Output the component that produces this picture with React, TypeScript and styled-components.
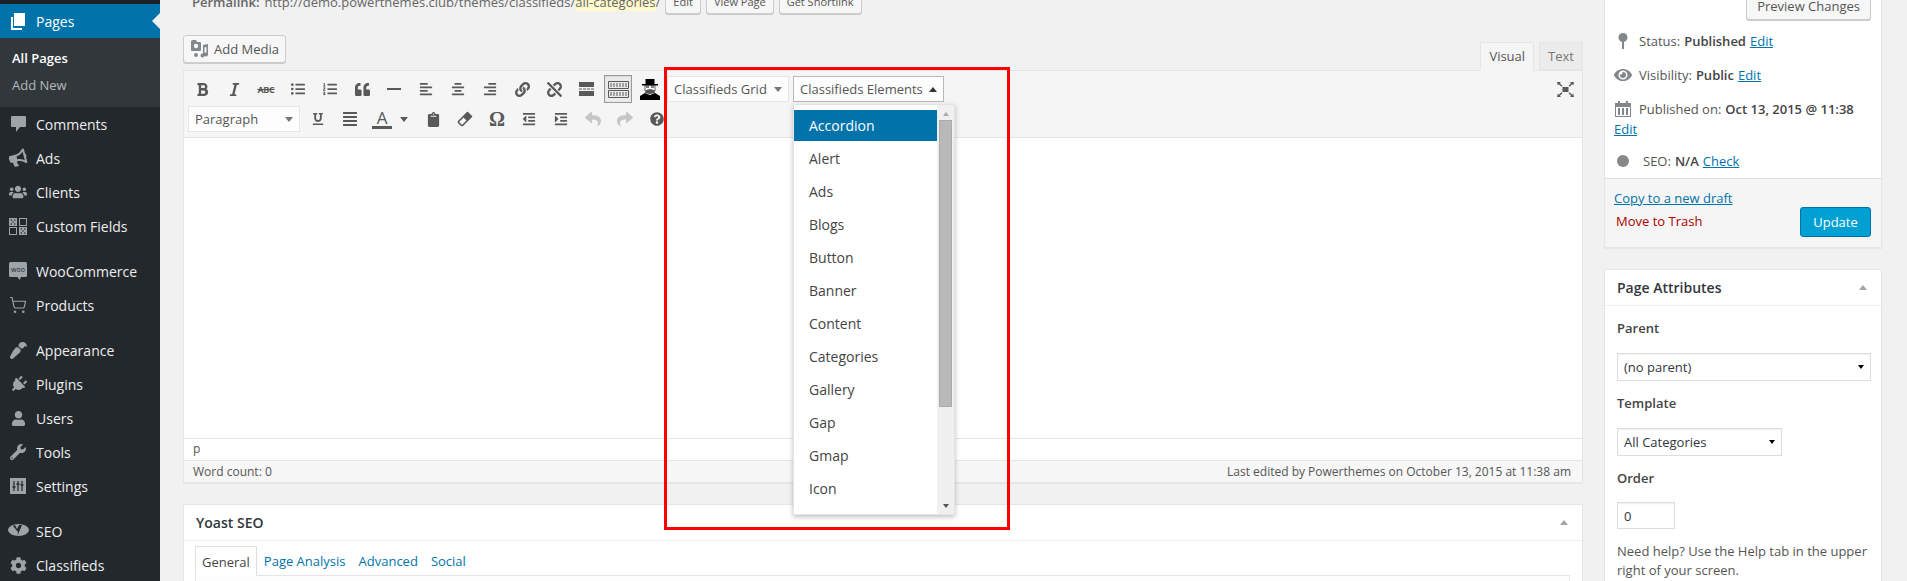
import React from "react";
import styled, { createGlobalStyle } from "styled-components";
import {
  FaBold, FaItalic, FaListUl, FaListOl, FaQuoteLeft, FaAlignLeft, FaAlignCenter, FaAlignRight,
  FaLink, FaUnlink, FaUnderline, FaAlignJustify, FaClipboard, FaOutdent, FaIndent,
  FaReply, FaShare, FaQuestionCircle, FaBullhorn, FaUsers, FaPaintBrush, FaPlug, FaUser,
  FaWrench, FaCog, FaEye,
} from "react-icons/fa";
import { ShoppingCart } from "lucide-react";

const GlobalStyle = createGlobalStyle`
  html, body { margin: 0; padding: 0; height: 581px; overflow: hidden; background: #f1f1f1; }
  body { font-family: "Open Sans", "Liberation Sans", sans-serif; font-size: 13px; color: #444; }
  * { box-sizing: border-box; }
`;

const Page = styled.div`
  position: relative;
  display: flex;
  width: 1907px;
  height: 581px;
  overflow: hidden;
`;

/* ---------- admin menu ---------- */

const Sidebar = styled.nav`
  flex: 0 0 160px;
  background: #23282d;
  border-top: 4px solid #1c2126;
  color: #eee;
  font-size: 14px;
`;

const MenuItem = styled.div<{ $active?: boolean; $gap?: boolean }>`
  position: relative;
  display: flex;
  align-items: center;
  height: 34px;
  margin-top: ${(p) => (p.$gap ? "11px" : "0")};
  background: ${(p) => (p.$active ? "#0073aa" : "transparent")};
  color: ${(p) => (p.$active ? "#fff" : "#eee")};
  &::before {
    content: "";
    display: ${(p) => (p.$active ? "block" : "none")};
    position: absolute;
    right: 0;
    top: 9px;
    border: 8px solid transparent;
    border-right-color: #f1f1f1;
    border-left-width: 0;
  }
`;

const MenuIcon = styled.span<{ $active?: boolean }>`
  display: flex;
  align-items: center;
  justify-content: center;
  width: 36px;
  color: ${(p) => (p.$active ? "#fff" : "#9ea3a8")};
`;

const SubMenu = styled.div`
  background: #32373c;
  padding: 7px 0 8px;
`;

const SubItem = styled.div<{ $current?: boolean }>`
  height: 27px;
  line-height: 27px;
  padding-left: 12px;
  font-size: 13px;
  font-weight: ${(p) => (p.$current ? 600 : 400)};
  color: ${(p) => (p.$current ? "#fff" : "#b4b9be")};
`;

const PagesIcon = () => (
  <svg width="16" height="17" viewBox="0 0 16 17" fill="#fff">
    <path d="M4 0h11v13H4z" />
    <path d="M1 4h2v11h9v2H1z" />
  </svg>
);

const CommentIcon = () => (
  <svg width="15" height="16" viewBox="0 0 15 16" fill="currentColor">
    <path d="M1 0h13a1 1 0 0 1 1 1v9a1 1 0 0 1-1 1H9l-4 5v-5H1a1 1 0 0 1-1-1V1a1 1 0 0 1 1-1z" />
  </svg>
);

const FieldsIcon = () => (
  <svg width="18" height="17" viewBox="0 0 18 17" fill="currentColor">
    <path d="M0 0h8v8H0zM1.500 2a.8.8 0 1 0 1.600 0 .8.8 0 0 0-1.600 0zM5 2a.8.8 0 1 0 1.600 0A.8.8 0 0 0 5 2zM3.200 4a.8.8 0 1 0 1.600 0 .8.8 0 0 0-1.600 0zM1.500 6a.8.8 0 1 0 1.600 0 .8.8 0 0 0-1.600 0zM5 6a.8.8 0 1 0 1.600 0A.8.8 0 0 0 5 6z" fillRule="evenodd" />
    <path d="M10 0h8v8h-8zm1 1v6h6V1z" fillRule="evenodd" />
    <path d="M0 9h8v8H0zm1 1v6h6v-6z" fillRule="evenodd" />
    <path d="M10 9h8v8h-8zM11.500 11a.8.8 0 1 0 1.600 0 .8.8 0 0 0-1.600 0zM15 11a.8.8 0 1 0 1.600 0 .8.8 0 0 0-1.600 0zM13.200 13a.8.8 0 1 0 1.600 0 .8.8 0 0 0-1.600 0zM11.500 15a.8.8 0 1 0 1.600 0 .8.8 0 0 0-1.600 0zM15 15a.8.8 0 1 0 1.600 0 .8.8 0 0 0-1.600 0z" fillRule="evenodd" />
  </svg>
);

const WooIcon = () => (
  <svg width="18" height="18" viewBox="0 0 18 18">
    <path d="M1.500 0h15A1.500 1.500 0 0 1 18 1.500v12a1.500 1.500 0 0 1-1.500 1.500H12l-1.500 3-2-3h-7A1.500 1.500 0 0 1 0 13.500v-12A1.500 1.500 0 0 1 1.500 0z" fill="#9ea3a8" />
    <text x="9" y="10" textAnchor="middle" fontSize="7" fontFamily="Open Sans, sans-serif" fill="#23282d">woo</text>
  </svg>
);

const SlidersIcon = () => (
  <svg width="16" height="16" viewBox="0 0 16 16">
    <path d="M0 0h16v16H0z" fill="currentColor" />
    <path d="M4 3v10M12 3v10M8 3v10" stroke="#23282d" strokeWidth="1.200" />
    <path d="M2.500 9h3M6.500 6h3M10.500 7h3" stroke="#23282d" strokeWidth="1.500" />
  </svg>
);

const YoastIcon = () => (
  <svg width="21" height="15" viewBox="0 0 21 15">
    <ellipse cx="10.500" cy="6" rx="10.500" ry="6" fill="currentColor" />
    <path d="M7 1l2 4 2-4h3l-3 7-1.500 4 3 2-3-.5 .5-5.500L5 2z" fill="#23282d" />
  </svg>
);

type NavEntry = { label: string; icon: React.ReactNode; gap?: boolean };

const navEntries: NavEntry[] = [
  { label: "Comments", icon: <CommentIcon /> },
  { label: "Ads", icon: <FaBullhorn size={18} style={{ transform: "rotate(-15deg)" }} /> },
  { label: "Clients", icon: <FaUsers size={18} /> },
  { label: "Custom Fields", icon: <FieldsIcon /> },
  { label: "WooCommerce", icon: <WooIcon />, gap: true },
  { label: "Products", icon: <ShoppingCart size={18} strokeWidth={1.5} /> },
  { label: "Appearance", icon: <FaPaintBrush size={17} style={{ transform: "rotate(180deg)" }} />, gap: true },
  { label: "Plugins", icon: <FaPlug size={17} style={{ transform: "rotate(45deg)" }} /> },
  { label: "Users", icon: <FaUser size={15} /> },
  { label: "Tools", icon: <FaWrench size={16} /> },
  { label: "Settings", icon: <SlidersIcon /> },
  { label: "SEO", icon: <YoastIcon />, gap: true },
  { label: "Classifieds", icon: <FaCog size={17} /> },
];

/* ---------- content ---------- */

const Content = styled.main`
  flex: 1;
  display: grid;
  grid-template-columns: 1400px 278px;
  column-gap: 21px;
  padding-left: 23px;
  align-items: start;
`;

const EditorColumn = styled.div`
  min-width: 0;
`;

const PermalinkRow = styled.div`
  display: flex;
  align-items: center;
  height: 26px;
  margin-top: -11px;
  padding-left: 9px;
  color: #666;
`;

const PermalinkLabel = styled.strong`
  font-weight: 600;
  margin-right: 5px;
`;

const Slug = styled.span`
  background: #fffbcc;
`;

const SmallButton = styled.span`
  display: inline-block;
  height: 24px;
  line-height: 22px;
  padding: 0 7px;
  margin-left: 5px;
  font-size: 11px;
  color: #555;
  background: #f7f7f7;
  border: 1px solid #ccc;
  border-radius: 3px;
  box-shadow: 0 1px 0 #ccc;
`;

const MediaBar = styled.div`
  display: flex;
  justify-content: space-between;
  align-items: flex-end;
  height: 55px;
`;

const MediaButton = styled.span`
  display: inline-flex;
  align-items: center;
  gap: 5px;
  width: 103px;
  height: 28px;
  margin-bottom: 7px;
  padding-left: 7px;
  color: #555;
  background: #f7f7f7;
  border: 1px solid #ccc;
  border-radius: 3px;
  box-shadow: 0 1px 0 #ccc;
`;

const Tabs = styled.div`
  display: flex;
  gap: 5px;
`;

const EditorTab = styled.span<{ $active?: boolean }>`
  height: ${(p) => (p.$active ? "29px" : "28px")};
  margin-bottom: ${(p) => (p.$active ? "-1px" : "0")};
  padding: 0 8px;
  line-height: 27px;
  color: ${(p) => (p.$active ? "#555" : "#777")};
  background: ${(p) => (p.$active ? "#f5f5f5" : "#ebebeb")};
  border: 1px solid #e5e5e5;
  border-bottom-color: ${(p) => (p.$active ? "#f5f5f5" : "#e5e5e5")};
  position: relative;
`;

const Toolbar = styled.div`
  display: flex;
  flex-direction: column;
  height: 68px;
  padding-top: 3px;
  background: #f5f5f5;
  border: 1px solid #e5e5e5;
`;

const ToolRow = styled.div<{ $inset: number }>`
  display: flex;
  align-items: center;
  height: 30px;
  padding-left: ${(p) => p.$inset}px;
`;

const Tool = styled.span<{ $width?: number; $pressed?: boolean; $faint?: boolean; $gap?: number }>`
  display: flex;
  align-items: center;
  justify-content: center;
  flex: 0 0 ${(p) => p.$width ?? 32}px;
  height: 28px;
  margin: 0 ${(p) => p.$gap ?? 0}px;
  color: ${(p) => (p.$faint ? "#c6c6c6" : "#595959")};
  background: ${(p) => (p.$pressed ? "#ebebeb" : "transparent")};
  ${(p) => p.$pressed && "border: 1px solid #999; box-shadow: inset 0 1px 2px rgba(0,0,0,.08);"}
`;

const ColorTool = styled(Tool)`
  justify-content: flex-start;
  gap: 8px;
  padding-left: 6px;
`;

const UnderlineTool = styled(Tool)`
  margin-left: 2px;
`;

const StrikeText = styled.span`
  font-size: 9px;
  font-weight: 700;
  line-height: 1;
  letter-spacing: -0.3px;
  text-decoration: line-through;
`;

const LetterA = styled.span`
  display: flex;
  flex-direction: column;
  align-items: center;
  width: 20px;
  font-size: 17px;
  line-height: 17px;
  &::after {
    content: "";
    width: 20px;
    height: 3px;
    background: #595959;
  }
`;

const Omega = styled.span`
  font-family: "Liberation Serif", serif;
  font-size: 20px;
  font-weight: 700;
`;

const Arrow = styled.i<{ $up?: boolean; $color?: string; $size?: number }>`
  display: inline-block;
  flex: none;
  width: 0;
  height: 0;
  border-left: ${(p) => p.$size ?? 4}px solid transparent;
  border-right: ${(p) => p.$size ?? 4}px solid transparent;
  ${(p) => (p.$up ? "border-bottom" : "border-top")}: ${(p) => (p.$size ?? 4) + 1}px solid ${(p) => p.$color ?? "#777"};
`;

const ToolSelect = styled.span<{ $width: number; $open?: boolean; $gap?: number }>`
  position: relative;
  display: flex;
  align-items: center;
  justify-content: space-between;
  flex: 0 0 ${(p) => p.$width}px;
  height: 26px;
  margin-left: ${(p) => p.$gap ?? 0}px;
  padding: 0 6px;
  color: #555;
  background: #fdfdfd;
  border: 1px solid ${(p) => (p.$open ? "#b9b9b9" : "#e5e5e5")};
`;

const FullscreenTool = styled(Tool)`
  margin-left: auto;
  margin-right: 4px;
`;

const Dropdown = styled.div`
  position: absolute;
  top: 27px;
  left: -1px;
  display: flex;
  width: 162px;
  height: 411px;
  background: #fff;
  border: 1px solid #e4e4e4;
  box-shadow: 0 2px 5px rgba(0, 0, 0, 0.25);
  z-index: 2;
`;

const OptionList = styled.div`
  flex: 1;
  padding-top: 5px;
  font-size: 14px;
`;

const OptionItem = styled.div<{ $active?: boolean }>`
  height: ${(p) => (p.$active ? "31px" : "33px")};
  margin-bottom: ${(p) => (p.$active ? "1px" : "0")};
  padding-left: 15px;
  line-height: ${(p) => (p.$active ? "31px" : "33px")};
  color: ${(p) => (p.$active ? "#fff" : "#444")};
  background: ${(p) => (p.$active ? "#0073aa" : "transparent")};
`;

const ScrollTrack = styled.div`
  display: flex;
  flex-direction: column;
  align-items: center;
  width: 17px;
  padding: 7px 2px 6px;
  background: #f0f0f0;
`;

const ScrollThumb = styled.div`
  align-self: stretch;
  height: 287px;
  margin: 4px 0 auto;
  background: #b9b9b9;
  border: 1px solid #aaa;
`;

const EditorBody = styled.div`
  height: 300px;
  background: #fff;
  border-left: 1px solid #e5e5e5;
  border-right: 1px solid #e5e5e5;
`;

const PathBar = styled.div`
  height: 23px;
  padding-left: 9px;
  line-height: 20px;
  font-size: 12px;
  color: #555;
  background: #fff;
  border: 1px solid #e5e5e5;
`;

const StatusBar = styled.div`
  display: flex;
  justify-content: space-between;
  height: 23px;
  margin-top: -1px;
  padding: 0 11px 0 9px;
  line-height: 21px;
  font-size: 12px;
  color: #555;
  background: #f7f7f7;
  border: 1px solid #e5e5e5;
  box-shadow: 0 1px 1px rgba(0, 0, 0, 0.04);
`;

const MetaBox = styled.section<{ $top: number }>`
  margin-top: ${(p) => p.$top}px;
  background: #fff;
  border: 1px solid #e5e5e5;
  box-shadow: 0 1px 1px rgba(0, 0, 0, 0.04);
`;

const BoxHeading = styled.h2`
  display: flex;
  align-items: center;
  justify-content: space-between;
  height: 36px;
  margin: 0;
  padding: 0 14px 0 12px;
  font-size: 14px;
  font-weight: 600;
  color: #32373c;
  border-bottom: 1px solid #eee;
`;

const SeoTabs = styled.div`
  display: flex;
  align-items: flex-end;
  height: 35px;
  margin: 0 12px 0 11px;
  border-bottom: 1px solid #e5e5e5;
`;

const SeoTab = styled.span<{ $active?: boolean }>`
  height: ${(p) => (p.$active ? "30px" : "29px")};
  padding: 0 6px;
  margin-right: 1px;
  margin-bottom: ${(p) => (p.$active ? "-1px" : "0")};
  line-height: 31px;
  color: ${(p) => (p.$active ? "#444" : "#0073aa")};
  ${(p) => p.$active && "border: 1px solid #dfdfdf; border-bottom: 1px solid #fff; background: #fff;"}
`;

const SeoPanel = styled.div`
  height: 60px;
  margin: 0 12px 0 11px;
  background: #fdfdfd;
  border-left: 1px solid #e5e5e5;
  border-right: 1px solid #e5e5e5;
`;

/* ---------- right column ---------- */

const SideColumn = styled.aside`
  min-width: 0;
`;

const PublishBox = styled.section`
  margin-top: -10px;
  background: #fff;
  border: 1px solid #e5e5e5;
  box-shadow: 0 1px 1px rgba(0, 0, 0, 0.04);
`;

const PreviewRow = styled.div`
  display: flex;
  justify-content: flex-end;
  height: 33px;
  padding-right: 10px;
`;

const PreviewButton = styled.span`
  height: 29px;
  padding: 0 10px;
  line-height: 29px;
  color: #555;
  background: #f7f7f7;
  border: 1px solid #ccc;
  border-radius: 3px;
  box-shadow: 0 1px 0 #ccc;
`;

const MiscRow = styled.div`
  display: flex;
  align-items: center;
  height: 34px;
  padding-left: 9px;
  color: #555;
`;

const MiscIcon = styled.span`
  display: flex;
  justify-content: center;
  flex: 0 0 18px;
  margin-right: 7px;
  color: #82878c;
`;

const DateRow = styled.div`
  height: 52px;
  padding: 7px 0 0 9px;
  line-height: 20px;
  color: #555;
`;

const DateLine = styled.div`
  display: flex;
  align-items: center;
`;

const Strong = styled.b`
  font-weight: 600;
  color: #444;
  margin: 0 4px;
`;

const Anchor = styled.a`
  color: #0073aa;
  text-decoration: underline;
`;

const SeoDot = styled.i`
  display: block;
  width: 12px;
  height: 12px;
  border-radius: 50%;
  background: #888;
`;

const SeoLabel = styled.span`
  padding-left: 4px;
`;

const MajorActions = styled.div`
  display: grid;
  grid-template-columns: 1fr auto;
  height: 69px;
  padding: 9px 10px 0 9px;
  background: #f5f5f5;
  border-top: 1px solid #ddd;
`;

const ActionLinks = styled.div`
  display: flex;
  flex-direction: column;
  gap: 3px;
  line-height: 20px;
`;

const TrashLink = styled.a`
  padding-left: 2px;
  color: #a00;
`;

const UpdateButton = styled.span`
  width: 71px;
  height: 30px;
  margin-top: 19px;
  line-height: 28px;
  text-align: center;
  color: #fff;
  background: #00a0d2;
  border: 1px solid #0073aa;
  border-radius: 3px;
`;

const AttributesBody = styled.div`
  padding: 0 12px;
  height: 300px;
`;

const FieldLabel = styled.div`
  height: 20px;
  margin-top: 12px;
  line-height: 20px;
  font-weight: 600;
  color: #444;
`;

const SelectBox = styled.div<{ $width: number }>`
  display: flex;
  align-items: center;
  justify-content: space-between;
  width: ${(p) => p.$width}px;
  height: 28px;
  margin-top: 15px;
  padding: 0 6px;
  background: #fff;
  border: 1px solid #ddd;
  box-shadow: inset 0 1px 2px rgba(0, 0, 0, 0.07);
  color: #32373c;
`;

const NumberBox = styled(SelectBox)`
  height: 27px;
  margin-top: 14px;
`;

const HelpText = styled.p`
  margin: 13px 0 0;
  line-height: 19px;
  color: #555;
`;

const Highlight = styled.div`
  position: absolute;
  left: 664px;
  top: 67px;
  width: 346px;
  height: 463px;
  border: 3px solid #f00;
  z-index: 3;
  pointer-events: none;
`;

const MediaIcon = () => (
  <svg width="18" height="18" viewBox="0 0 18 18" fill="#82878c">
    <path d="M2 0h3l1 2h3a1 1 0 0 1 1 1v7a1 1 0 0 1-1 1H1a1 1 0 0 1-1-1V2a2 2 0 0 1 2-2z" />
    <circle cx="5" cy="6" r="2.200" fill="#f7f7f7" />
    <path d="M12 5l5-1v10.500a2 2 0 1 1-1.500-2V7l-2 .5v8a2 2 0 1 1-1.500-2zM3 15a2 2 0 1 0 4 0 2 2 0 0 0-4 0z" />
  </svg>
);

const HrIcon = () => (
  <svg width="14" height="2" viewBox="0 0 14 2"><path d="M0 0h14v2H0z" fill="currentColor" /></svg>
);

const ReadMoreIcon = () => (
  <svg width="15" height="14" viewBox="0 0 15 14" fill="currentColor">
    <path d="M0 0h15v5H0zM0 9h15v5H0zM0 6.500h3v1H0zM4 6.500h3v1H4zM8 6.500h3v1H8zM12 6.500h3v1h-3z" />
  </svg>
);

const KeyboardIcon = () => (
  <svg width="21" height="17" viewBox="0 0 21 17" fill="none" stroke="#595959">
    <path d="M.5 .5h20v7H.5zM.5 9.500h20v7H.5z" />
    <path d="M2 3h17M2 5h17M2 12h17M2 14h17" strokeDasharray="2 1" />
  </svg>
);

const PersonIcon = () => (
  <svg width="20" height="21" viewBox="0 0 20 21">
    <path d="M5.500 0h9v5h-9zM2 5h16v1.500H2z" fill="#000" />
    <path d="M5 6.500h10V12H5z" fill="#fff" stroke="#000" strokeWidth=".6" />
    <path d="M6 8h3M11 8h3" stroke="#000" />
    <path d="M6 11l4-1 4 1 1 3-5 1-5-1z" fill="#555" />
    <path d="M0 21v-4l5-3 5 2 5-2 5 3v4z" fill="#000" />
  </svg>
);

const EraserIcon = () => (
  <svg width="16" height="16" viewBox="0 0 16 16" fill="none" stroke="currentColor" strokeWidth="1.600">
    <path d="M10.500 1.500l4 4-9 9h-1l-3-3v-1z" strokeLinejoin="round" />
    <path d="M10.500 1.500l4 4-4.500 4.500-4-4z" fill="currentColor" stroke="none" />
  </svg>
);

const FullscreenIcon = () => (
  <svg width="17" height="15" viewBox="0 0 17 15" fill="currentColor">
    <path d="M5.500 5h6v5h-6z" />
    <path d="M0 0h4L2.800 1.200 5.500 3.800 4.500 4.800 1.800 2.200.8 3.400zM17 0h-4l1.200 1.200-2.700 2.600 1 1 2.700-2.600 1 1.200zM0 15h4l-1.200-1.200 2.700-2.600-1-1-2.700 2.600-1-1.200zM17 15h-4l1.200-1.200-2.700-2.600 1-1 2.700 2.600 1-1.200z" />
  </svg>
);

const PinIcon = () => (
  <svg width="10" height="16" viewBox="0 0 10 16" fill="currentColor">
    <circle cx="5" cy="4.500" r="4.500" />
    <path d="M4 8h2v8H4z" />
  </svg>
);

const CalendarIcon = () => (
  <svg width="16" height="16" viewBox="0 0 16 16" fill="currentColor">
    <path d="M0 2h3V0h2v2h6V0h2v2h3v14H0zm1 4v9h14V6zM3 7h2v7H3zM7 7h2v7H7zM11 7h2v7h-2z" fillRule="evenodd" />
  </svg>
);

const options = ["Accordion", "Alert", "Ads", "Blogs", "Button", "Banner", "Content", "Categories", "Gallery", "Gap", "Gmap", "Icon"];

export default function App() {
  return (
    <Page>
      <GlobalStyle />
      <Sidebar>
        <MenuItem $active>
          <MenuIcon $active><PagesIcon /></MenuIcon>
          Pages
        </MenuItem>
        <SubMenu>
          <SubItem $current>All Pages</SubItem>
          <SubItem>Add New</SubItem>
        </SubMenu>
        {navEntries.map((entry) => (
          <MenuItem key={entry.label} $gap={entry.gap}>
            <MenuIcon>{entry.icon}</MenuIcon>
            {entry.label}
          </MenuItem>
        ))}
      </Sidebar>

      <Content>
        <EditorColumn>
          <PermalinkRow>
            <PermalinkLabel>Permalink:</PermalinkLabel>
            http://demo.powerthemes.club/themes/classifieds/<Slug>all-categories</Slug>/
            <SmallButton>Edit</SmallButton>
            <SmallButton>View Page</SmallButton>
            <SmallButton>Get Shortlink</SmallButton>
          </PermalinkRow>
          <MediaBar>
            <MediaButton><MediaIcon />Add Media</MediaButton>
            <Tabs>
              <EditorTab $active>Visual</EditorTab>
              <EditorTab>Text</EditorTab>
            </Tabs>
          </MediaBar>

          <Toolbar>
            <ToolRow $inset={2}>
              <Tool><FaBold size={15} /></Tool>
              <Tool><FaItalic size={15} /></Tool>
              <Tool><StrikeText>ABC</StrikeText></Tool>
              <Tool><FaListUl size={14} /></Tool>
              <Tool><FaListOl size={14} /></Tool>
              <Tool><FaQuoteLeft size={15} /></Tool>
              <Tool><HrIcon /></Tool>
              <Tool><FaAlignLeft size={14} /></Tool>
              <Tool><FaAlignCenter size={14} /></Tool>
              <Tool><FaAlignRight size={14} /></Tool>
              <Tool><FaLink size={15} /></Tool>
              <Tool><FaUnlink size={15} /></Tool>
              <Tool><ReadMoreIcon /></Tool>
              <Tool $width={28} $pressed $gap={2}><KeyboardIcon /></Tool>
              <Tool><PersonIcon /></Tool>
              <ToolSelect $width={122} $gap={1}>
                Classifieds Grid
                <Arrow $color="#777" />
              </ToolSelect>
              <ToolSelect $width={151} $gap={4} $open>
                Classifieds Elements
                <Arrow $up $color="#333" />
                <Dropdown>
                  <OptionList>
                    {options.map((name, i) => (
                      <OptionItem key={name} $active={i === 0}>{name}</OptionItem>
                    ))}
                  </OptionList>
                  <ScrollTrack>
                    <Arrow $up $size={3} $color="#aaa" />
                    <ScrollThumb />
                    <Arrow $size={3} $color="#555" />
                  </ScrollTrack>
                </Dropdown>
              </ToolSelect>
              <FullscreenTool $width={26}><FullscreenIcon /></FullscreenTool>
            </ToolRow>
            <ToolRow $inset={4}>
              <ToolSelect $width={112}>
                Paragraph
                <Arrow $color="#777" />
              </ToolSelect>
              <UnderlineTool><FaUnderline size={12} /></UnderlineTool>
              <Tool><FaAlignJustify size={16} /></Tool>
              <ColorTool $width={51}>
                <LetterA>A</LetterA>
                <Arrow $color="#595959" />
              </ColorTool>
              <Tool><FaClipboard size={15} /></Tool>
              <Tool><EraserIcon /></Tool>
              <Tool><Omega>Ω</Omega></Tool>
              <Tool><FaOutdent size={14} /></Tool>
              <Tool><FaIndent size={14} /></Tool>
              <Tool $faint><FaReply size={16} /></Tool>
              <Tool $faint><FaShare size={16} /></Tool>
              <Tool><FaQuestionCircle size={14} /></Tool>
            </ToolRow>
          </Toolbar>

          <EditorBody />
          <PathBar>p</PathBar>
          <StatusBar>
            <span>Word count: 0</span>
            <span>Last edited by Powerthemes on October 13, 2015 at 11:38 am</span>
          </StatusBar>

          <MetaBox $top={21}>
            <BoxHeading>
              Yoast SEO
              <Arrow $up $color="#a0a5aa" />
            </BoxHeading>
            <SeoTabs>
              <SeoTab $active>General</SeoTab>
              <SeoTab>Page Analysis</SeoTab>
              <SeoTab>Advanced</SeoTab>
              <SeoTab>Social</SeoTab>
            </SeoTabs>
            <SeoPanel />
          </MetaBox>
        </EditorColumn>

        <SideColumn>
          <PublishBox>
            <PreviewRow><PreviewButton>Preview Changes</PreviewButton></PreviewRow>
            <MiscRow>
              <MiscIcon><PinIcon /></MiscIcon>
              Status:<Strong>Published</Strong><Anchor>Edit</Anchor>
            </MiscRow>
            <MiscRow>
              <MiscIcon><FaEye size={18} /></MiscIcon>
              Visibility:<Strong>Public</Strong><Anchor>Edit</Anchor>
            </MiscRow>
            <DateRow>
              <DateLine>
                <MiscIcon><CalendarIcon /></MiscIcon>
                Published on:<Strong>Oct 13, 2015 @ 11:38</Strong>
              </DateLine>
              <Anchor>Edit</Anchor>
            </DateRow>
            <MiscRow>
              <MiscIcon><SeoDot /></MiscIcon>
              <SeoLabel>SEO:</SeoLabel><Strong>N/A</Strong><Anchor>Check</Anchor>
            </MiscRow>
            <MajorActions>
              <ActionLinks>
                <Anchor>Copy to a new draft</Anchor>
                <TrashLink>Move to Trash</TrashLink>
              </ActionLinks>
              <UpdateButton>Update</UpdateButton>
            </MajorActions>
          </PublishBox>

          <MetaBox $top={21}>
            <BoxHeading>
              Page Attributes
              <Arrow $up $color="#a0a5aa" />
            </BoxHeading>
            <AttributesBody>
              <FieldLabel>Parent</FieldLabel>
              <SelectBox $width={254}>(no parent)<Arrow $size={3} $color="#000" /></SelectBox>
              <FieldLabel>Template</FieldLabel>
              <SelectBox $width={165}>All Categories<Arrow $size={3} $color="#000" /></SelectBox>
              <FieldLabel>Order</FieldLabel>
              <NumberBox $width={58}>0</NumberBox>
              <HelpText>Need help? Use the Help tab in the upper right of your screen.</HelpText>
            </AttributesBody>
          </MetaBox>
        </SideColumn>
      </Content>
      <Highlight />
    </Page>
  );
}
